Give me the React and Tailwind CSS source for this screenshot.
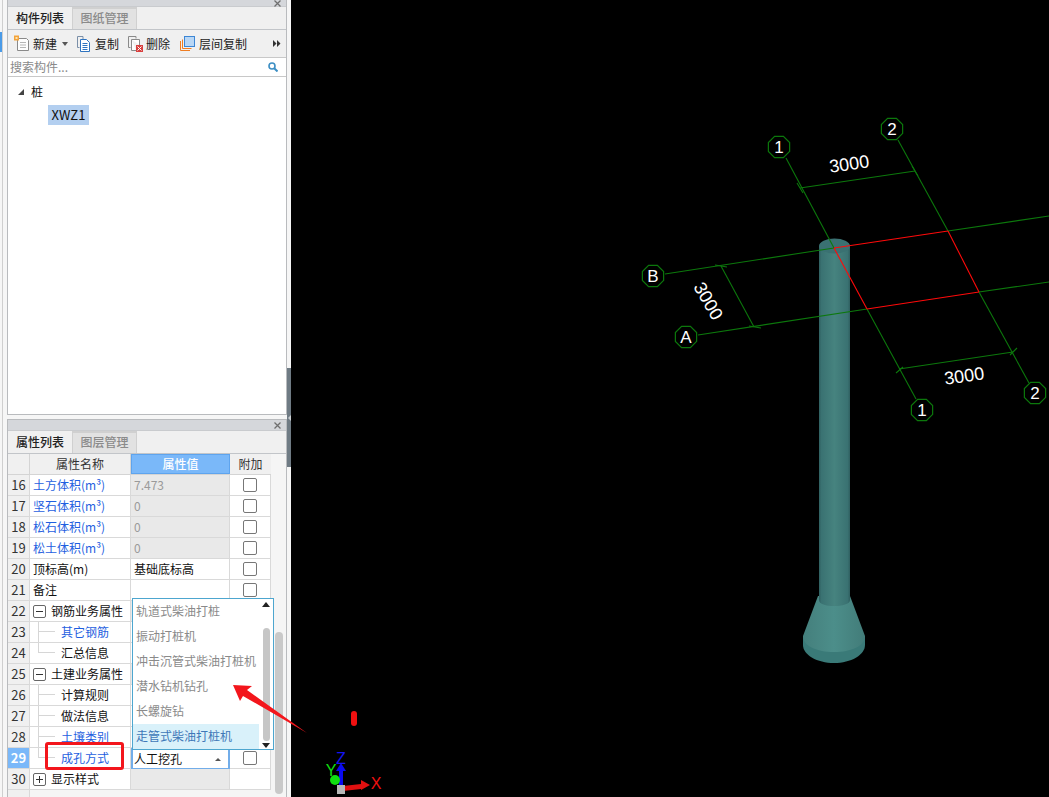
import React from "react";

const FONT = "font-['Noto_Sans_CJK_SC','Microsoft_YaHei','Noto_Sans',sans-serif]";

function NewIcon() {
  return (
    <svg width="16" height="17" viewBox="0 0 16 17" className="shrink-0">
      <path d="M3.5 3.5H12.5L14.5 5.5V15.5H3.5Z" fill="#fdfdfd" stroke="#8a8a8a" />
      <path d="M6 7.5H12M6 10H12M6 12.5H12" stroke="#b5b5b5" />
      <rect x="0" y="0.5" width="5" height="5" fill="#f3a33a" />
      <rect x="1.5" y="2" width="2" height="2" fill="#fde3b0" />
    </svg>
  );
}
function CopyIcon() {
  return (
    <svg width="14" height="16" viewBox="0 0 14 16" className="shrink-0">
      <path d="M0.5 0.5H6V3M0.5 0.5V11.5H2.5" fill="none" stroke="#7a8fa8" />
      <path d="M3.5 3.5H9.5L12.5 6.5V15.5H3.5Z" fill="#fff" stroke="#2f74c0" />
      <path d="M5.5 7.5H10.5M5.5 9.5H10.5M5.5 11.5H10.5M5.5 13.5H10.5" stroke="#2f74c0" />
    </svg>
  );
}
function DeleteIcon() {
  return (
    <svg width="15" height="16" viewBox="0 0 15 16" className="shrink-0">
      <path d="M0.5 0.5H8V2.5M0.5 0.5V11.5H2.5" fill="none" stroke="#8a8a8a" />
      <path d="M3.5 3.5H11.5V9M3.5 3.5V14.5H8" fill="#fff" stroke="#8a8a8a" />
      <rect x="8" y="9" width="7" height="7" fill="#d9403f" />
      <path d="M9.5 10.5L13.5 14.5M13.5 10.5L9.5 14.5" stroke="#fff" />
    </svg>
  );
}
function LayerIcon() {
  return (
    <svg width="15" height="15" viewBox="0 0 15 15" className="shrink-0">
      <path d="M0.5 5V14.5H10" fill="none" stroke="#ee7d22" />
      <path d="M2.5 3.5V12.5H11.5" fill="none" stroke="#ee7d22" />
      <rect x="4.5" y="0.5" width="10" height="10" fill="#b9d7f5" stroke="#3d86d4" />
    </svg>
  );
}

function Tabs({ first, second }) {
  return (
    <div className="flex h-[23px] shrink-0 border-b border-[#c2c5c9] bg-[#f0f0f0] text-[12px]">
      <div className="flex w-[65px] items-center justify-center border-r border-[#d0d0d0] pb-[1px] font-medium text-[#222]">{first}</div>
      <div className="flex w-[64px] items-center justify-center border-t-2 border-r border-[#d0d0d0] bg-[#e2e2e2] pb-[2px] font-medium text-[#8a8a8a]">{second}</div>
    </div>
  );
}

function TitleBar({ h }) {
  return (
    <div className={`flex shrink-0 items-center justify-end border-b border-[#c9cbce] bg-[#d5d7db] pr-[5px] ${h}`}>
      <svg width="7" height="7" viewBox="0 0 7 7"><path d="M0.5 0.5L6.5 6.5M6.5 0.5L0.5 6.5" stroke="#6f6f6f" strokeWidth="1.3" /></svg>
    </div>
  );
}

function ComponentPanel() {
  return (
    <div className="flex h-[415px] flex-col border-x border-b border-[#b9bbbe] bg-white">
      <TitleBar h="h-[7px]" />
      <Tabs first="构件列表" second="图纸管理" />
      <div className="flex h-[28px] shrink-0 items-center border-b border-[#c8c8c8] bg-[#f0f0f0] pl-[6px] pr-[3px] text-[12px] text-[#222]">
        <NewIcon />
        <span className="ml-[3px]">新建</span>
        <svg width="6" height="4" viewBox="0 0 6 4" className="ml-[5px]"><path d="M0 0H6L3 4Z" fill="#555" /></svg>
        <span className="ml-[9px] flex"><CopyIcon /></span>
        <span className="ml-[4px]">复制</span>
        <span className="ml-[9px] flex"><DeleteIcon /></span>
        <span className="ml-[3px]">删除</span>
        <span className="ml-[10px] flex"><LayerIcon /></span>
        <span className="ml-[4px]">层间复制</span>
        <svg width="8" height="7" viewBox="0 0 8 7" className="ml-auto mr-[2px]"><path d="M0 0L3.5 3.5L0 7ZM4 0L7.5 3.5L4 7Z" fill="#333" /></svg>
      </div>
      <div className="flex h-[19px] shrink-0 items-center justify-between border-b border-[#c8c8c8] bg-white pl-[2px] pr-[8px] text-[12px] text-[#8a8a8a]">
        <span>搜索构件...</span>
        <svg width="10" height="10" viewBox="0 0 10 10"><circle cx="4" cy="4" r="3" fill="none" stroke="#3d8fc4" strokeWidth="1.6" /><path d="M6.2 6.2L9.5 9.5" stroke="#3d8fc4" strokeWidth="2" /></svg>
      </div>
      <div className="flex flex-1 flex-col pl-[9px] pt-[4px] text-[12px] text-[#111]">
        <div className="flex h-[20px] items-center pt-[1px]">
          <svg width="6" height="6" viewBox="0 0 6 6" className="ml-[1px]"><path d="M6 0V6H0Z" fill="#444" /></svg>
          <span className="ml-[7px]">桩</span>
        </div>
        <div className="ml-[31px] mt-[4px] flex h-[20px] w-[41px] items-center justify-center bg-[#b3cff0] text-[13px]">XWZ1</div>
      </div>
    </div>
  );
}

const GRAY_VALUE = "bg-[#e9e9e9]";

const ROWS = [
  { n: 16, name: "土方体积(m³)", blue: true, value: "7.473", gray: true, check: true },
  { n: 17, name: "坚石体积(m³)", blue: true, value: "0", gray: true, check: true },
  { n: 18, name: "松石体积(m³)", blue: true, value: "0", gray: true, check: true },
  { n: 19, name: "松土体积(m³)", blue: true, value: "0", gray: true, check: true },
  { n: 20, name: "顶标高(m)", value: "基础底标高", check: true },
  { n: 21, name: "备注", value: "", check: true },
  { n: 22, name: "钢筋业务属性", group: "-", gray: true },
  { n: 23, name: "其它钢筋", blue: true, child: "mid" },
  { n: 24, name: "汇总信息", child: "last" },
  { n: 25, name: "土建业务属性", group: "-", gray: true },
  { n: 26, name: "计算规则", child: "mid" },
  { n: 27, name: "做法信息", child: "mid" },
  { n: 28, name: "土壤类别", blue: true, child: "mid" },
  { n: 29, name: "成孔方式", blue: true, child: "last", active: true, check: true },
  { n: 30, name: "显示样式", group: "+", gray: true },
];

function Box({ sign }) {
  return (
    <span className="flex h-[13px] w-[13px] shrink-0 items-center justify-center rounded-[2px] border border-[#666] bg-white">
      <svg width="7" height="7" viewBox="0 0 7 7">
        <path d="M0 3.5H7" stroke="#333" />
        {sign === "+" && <path d="M3.5 0V7" stroke="#333" />}
      </svg>
    </span>
  );
}

function NameCell({ row }) {
  const color = row.blue ? "text-[#1f5fe0]" : "text-[#111]";
  if (row.group) {
    return (
      <div className="flex h-full w-[101px] shrink-0 items-center border-r border-[#d9d9d9] pl-[3px] text-[#111]">
        <Box sign={row.group} />
        <span className="ml-[5px]">{row.name}</span>
      </div>
    );
  }
  if (row.child) {
    return (
      <div className={`flex h-full w-[101px] shrink-0 items-stretch border-r border-[#d9d9d9] ${color}`}>
        <div className="ml-[8px] flex w-[17px] shrink-0 flex-col">
          <div className="h-1/2 border-b border-l border-[#d6d6d6]" />
          {row.child === "mid" && <div className="h-1/2 border-l border-[#d6d6d6]" />}
        </div>
        <span className="ml-[6px] flex items-center">{row.name}</span>
      </div>
    );
  }
  return <div className={`flex h-full w-[101px] shrink-0 items-center border-r border-[#d9d9d9] pl-[3px] ${color}`}>{row.name}</div>;
}

function ValueCell({ row }) {
  if (row.active) {
    return (
      <div className="flex h-[22px] w-[99px] shrink-0 items-center justify-between border-2 border-[#72ade9] bg-white pl-[1px] pr-[7px] text-[#111]">
        <span>人工挖孔</span>
        <svg width="6" height="3" viewBox="0 0 6 3"><path d="M3 0L6 3H0Z" fill="#555" /></svg>
      </div>
    );
  }
  return (
    <div className={`flex h-full w-[99px] shrink-0 items-center border-r border-[#d9d9d9] pl-[3px] ${row.gray ? GRAY_VALUE : ""} ${row.value && row.gray ? "text-[#9a9a9a]" : "text-[#111]"}`}>
      {row.value}
    </div>
  );
}

function PropertyTable() {
  return (
    <div className="flex flex-1 overflow-hidden bg-[#f5f5f5]">
      <div className="flex w-[263px] shrink-0 flex-col text-[12px]">
        <div className="flex h-[21px] shrink-0 border-b border-[#d4d4d4] bg-[#f0f0f0] text-[#333]">
          <div className="w-[22px] shrink-0 border-r border-[#d4d4d4]" />
          <div className="flex w-[101px] shrink-0 items-center justify-center border-r border-[#d4d4d4]">属性名称</div>
          <div className="flex w-[99px] shrink-0 items-center justify-center border border-[#5ea4ee] bg-[#7ab8f9] font-medium text-white">属性值</div>
          <div className="flex w-[41px] shrink-0 items-center justify-center">附加</div>
        </div>
        {ROWS.map((row) => (
          <div key={row.n} className="flex h-[21px] shrink-0 border-b border-[#d9d9d9] bg-white">
            <div className={`flex h-full w-[22px] shrink-0 items-center justify-center border-r border-[#d9d9d9] text-[13px] ${row.active ? "bg-[#7ab8f9] font-bold text-white" : "bg-[#f0f0f0] text-[#333]"}`}>
              {row.n}
            </div>
            <NameCell row={row} />
            <ValueCell row={row} />
            <div className="flex h-full w-[41px] shrink-0 items-center justify-center border-r border-[#d9d9d9]">
              {row.check && <span className="h-[14px] w-[14px] rounded-[2px] border border-[#777] bg-white" />}
            </div>
          </div>
        ))}
        <div className="flex flex-1">
          <div className="w-[22px] border-r border-[#d9d9d9] bg-[#f0f0f0]" />
          <div className="flex-1 bg-[#f5f5f5]" />
        </div>
      </div>
      <div className="flex flex-1 flex-col pl-[4px] pt-[178px]">
        <div className="h-[162px] w-[8px] rounded-[4px] bg-[#c9c9c9]" />
      </div>
    </div>
  );
}

function PropertyPanel() {
  return (
    <div className="flex flex-1 flex-col overflow-hidden border-x border-t border-[#b9bbbe] bg-[#f5f5f5]">
      <TitleBar h="h-[11px]" />
      <Tabs first="属性列表" second="图层管理" />
      <PropertyTable />
    </div>
  );
}

function Dropdown() {
  const items = ["轨道式柴油打桩", "振动打桩机", "冲击沉管式柴油打桩机", "潜水钻机钻孔", "长螺旋钻", "走管式柴油打桩机"];
  return (
    <div className="absolute left-[132px] top-[598px] flex h-[152px] w-[142px] border border-[#4da6cf] bg-white text-[12px]">
      <div className="flex w-[126px] shrink-0 flex-col">
        {items.map((t, i) => (
          <div key={t} className={`flex h-[25px] items-center whitespace-nowrap pb-[1px] pl-[3px] ${i === 5 ? "bg-[#d9f1fa] text-[#3f78b8]" : "text-[#8a8a8a]"}`}>{t}</div>
        ))}
      </div>
      <div className="flex flex-1 flex-col items-center justify-between pt-[3px] pb-[1px]">
        <svg width="8" height="5" viewBox="0 0 8 5"><path d="M4 0L8 5H0Z" fill="#222" /></svg>
        <div className="my-[1px] mt-[20px] h-[113px] w-[7px] rounded-[4px] bg-[#c6c6c6]" />
        <svg width="8" height="5" viewBox="0 0 8 5"><path d="M4 5L8 0H0Z" fill="#222" /></svg>
      </div>
    </div>
  );
}

function Bubble({ x, y, label }) {
  const r = 11.5;
  const pts = [...Array(8)].map((_, i) => {
    const a = Math.PI / 8 + (i * Math.PI) / 4;
    return `${x + r * Math.cos(a)},${y + r * Math.sin(a)}`;
  }).join(" ");
  return (
    <g>
      <polygon points={pts} fill="#000" stroke="#0c780c" strokeWidth="1.2" />
      <text x={x} y={y + 6} textAnchor="middle" fontSize="17" fill="#fff" fontFamily="'Liberation Sans',sans-serif">{label}</text>
    </g>
  );
}

function Scene() {
  return (
    <svg viewBox="291 0 758 797" className="block h-[797px] w-[758px] shrink-0 bg-black">
      <defs>
        <linearGradient id="shaft" x1="0" x2="1" y1="0" y2="0">
          <stop offset="0" stopColor="#2f5f60" />
          <stop offset="0.08" stopColor="#3a7272" />
          <stop offset="0.5" stopColor="#46837f" />
          <stop offset="0.92" stopColor="#3a7272" />
          <stop offset="1" stopColor="#2f5f60" />
        </linearGradient>
        <linearGradient id="cone" x1="0" x2="1" y1="0" y2="0">
          <stop offset="0" stopColor="#447f7c" />
          <stop offset="0.5" stopColor="#4c8e8a" />
          <stop offset="1" stopColor="#427c79" />
        </linearGradient>
      </defs>

      <path d="M803 636V645C803 655 817 663 834 663C851 663 865 655 865 645V636Z" fill="#3a7a78" />
      <path d="M818 596L803 636C803 646 817 652 834 652C851 652 865 646 865 636L850 596Z" fill="url(#cone)" />
      <path d="M819 246V600C819 604 826 606 834 606C842 606 850 604 850 600V246Z" fill="url(#shaft)" />
      <ellipse cx="834.5" cy="246" rx="15.5" ry="7.5" fill="#3a7172" />

      <g stroke="#0c780c" strokeWidth="1.1" fill="none">
        <path d="M786 158L834 248" />
        <path d="M867 309L916 399" />
        <path d="M898 140L948 231" />
        <path d="M979 292L1029 383" />
        <path d="M665 274L834 248" />
        <path d="M948 231L1049 216" />
        <path d="M698 335L867 309" />
        <path d="M979 292L1049 282" />
        <path d="M800 188L915 171" />
        <path d="M797 183L803 193M912 166L918 176" />
        <path d="M899 369L1013 352" />
        <path d="M896 373L903 367M1010 355L1017 348" />
        <path d="M721 266L754 327" />
        <path d="M715 265L727 267M749 326L761 328" />
      </g>
      <g stroke="#ff0a0a" strokeWidth="1.1" fill="none">
        <path d="M834 248L948 231" />
        <path d="M867 309L979 292" />
        <path d="M834 248L867 309" />
        <path d="M948 231L979 292" />
      </g>

      <Bubble x={779} y={147} label="1" />
      <Bubble x={892} y={129} label="2" />
      <Bubble x={653} y={276} label="B" />
      <Bubble x={686} y={337} label="A" />
      <Bubble x={922} y={410} label="1" />
      <Bubble x={1035} y={393} label="2" />

      <g fill="#fff" fontSize="18" fontFamily="'Liberation Sans',sans-serif" textAnchor="middle">
        <text transform="translate(850 170) rotate(-8)">3000</text>
        <text transform="translate(965 382) rotate(-8)">3000</text>
        <text transform="translate(703 304) rotate(60)">3000</text>
      </g>

      <rect x="351" y="711" width="6" height="15" rx="3" fill="#f01010" />

      <g>
        <path d="M343 786L361 784V780L370 785L361 790V789L343 791Z" fill="#e01010" />
        <path d="M339 786V771H336L341 763L346 771H343V786Z" fill="#0a0af0" />
        <circle cx="335" cy="780" r="5" fill="#10e010" />
        <rect x="337" y="785" width="8" height="9" fill="#b8b8b8" />
        <text x="341" y="764" fontSize="16" fill="#1414f0" textAnchor="middle" fontFamily="'Liberation Sans',sans-serif">Z</text>
        <text x="331" y="776" fontSize="16" fill="#10e010" textAnchor="middle" fontFamily="'Liberation Sans',sans-serif">Y</text>
        <text x="376" y="789" fontSize="16" fill="#f01010" textAnchor="middle" fontFamily="'Liberation Sans',sans-serif">X</text>
      </g>
    </svg>
  );
}

export default function App() {
  return (
    <div className={`relative flex h-[797px] w-[1049px] overflow-hidden bg-[#f6f6f6] ${FONT}`}>
      <div className="flex w-[7px] shrink-0">
        <div className="w-[3px] shrink-0 border-r border-[#cfcfcf] pt-[32px]">
          <div className="h-[20px] w-[2px] bg-[#4a9be8]" />
        </div>
      </div>
      <div className="flex w-[280px] shrink-0 flex-col">
        <ComponentPanel />
        <div className="h-[4px] shrink-0" />
        <PropertyPanel />
      </div>
      <div className="flex w-[4px] shrink-0 flex-col pt-[368px]">
        <div className="flex h-[99px] items-center justify-end bg-[#6f7b84]">
          <svg width="3" height="6" viewBox="0 0 3 6"><path d="M3 0V6L0 3Z" fill="#c9ced2" /></svg>
        </div>
      </div>
      <Scene />

      <Dropdown />

      <div className="absolute left-[45px] top-[742px] h-[28px] w-[79px] rounded-[3px] border-[3px] border-[#f3161c]" />
      <svg viewBox="0 0 1049 797" className="pointer-events-none absolute left-0 top-0 h-[797px] w-[1049px]">
        <polygon points="233,685 252,686 247,690 307,733 243,696 240,701" fill="#f3161c" />
      </svg>
    </div>
  );
}
